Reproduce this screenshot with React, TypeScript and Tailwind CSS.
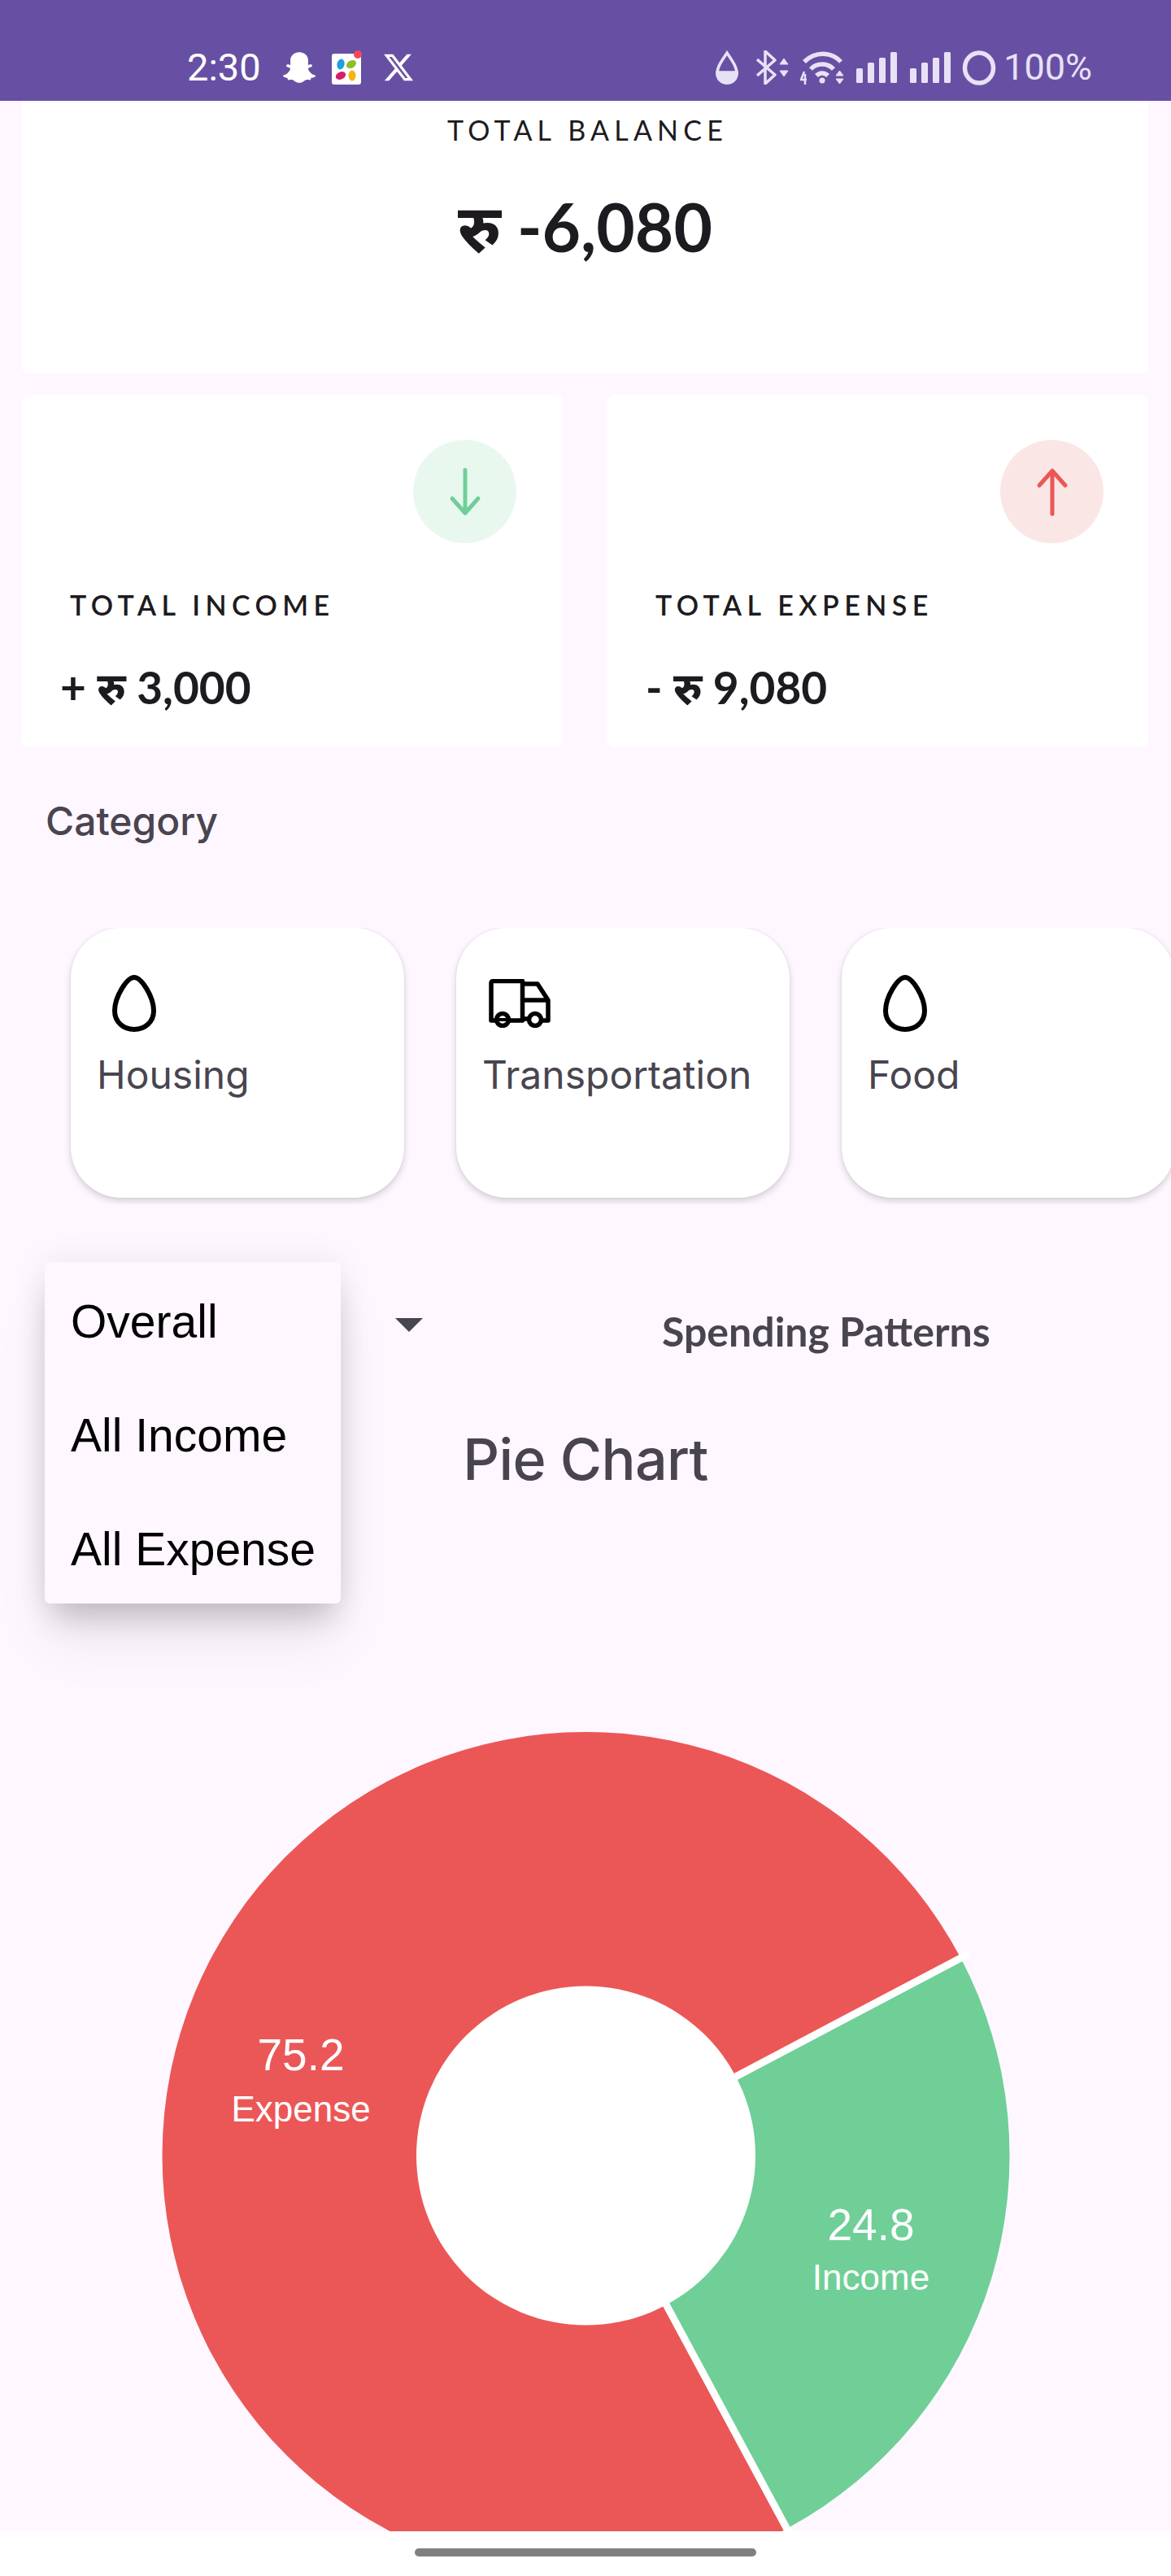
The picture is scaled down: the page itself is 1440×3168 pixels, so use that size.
import React from "react";
import { FaXTwitter } from "react-icons/fa6";
import { FaSnapchatGhost } from "react-icons/fa";

const lato = "font-['Lato','Noto_Sans',sans-serif]";
const inter = "font-['Inter',sans-serif]";
const arial = "font-['Liberation_Sans',Arial,sans-serif]";

function Egg() {
  return (
    <svg width="56" height="70" viewBox="0 0 56 70" fill="none" stroke="#000" strokeWidth="6">
      <path d="M28 3C37 3 52 27 52 44C52 58 41 67 28 67C15 67 4 58 4 44C4 27 19 3 28 3Z" />
    </svg>
  );
}

function Truck() {
  return (
    <svg width="76" height="60" viewBox="0 0 76 60" fill="none" stroke="#000" strokeWidth="5.500" strokeLinejoin="round">
      <path d="M9 51H3V5Q3 2.500 6 2.500H41.500V51H26" />
      <path d="M41.500 6H60L73 26V51H66" />
      <path d="M41.500 26H73" />
      <path d="M41.500 49H48" />
      <circle cx="17" cy="50" r="7.500" fill="#fff" />
      <path d="M10 50H24" strokeWidth="4" />
      <circle cx="57" cy="50" r="7.500" fill="#fff" />
    </svg>
  );
}

function CategoryCard({ label, icon, iconClass }: { label: string; icon: React.ReactNode; iconClass: string }) {
  return (
    <div className="w-[410px] h-[332px] shrink-0 rounded-[62px] bg-white shadow-[0_4px_8px_rgba(0,0,0,0.16),0_0_3px_rgba(0,0,0,0.08)] pl-[32px] pt-[58px]">
      <div className={`h-[70px] flex items-center ${iconClass}`}>{icon}</div>
      <div className={`${inter} mt-[24px] text-[48px] leading-[58px] text-[#49454f]`}>{label}</div>
    </div>
  );
}

function Arrow({ color, up }: { color: string; up?: boolean }) {
  return (
    <svg width="40" height="60" viewBox="0 0 40 60" fill="none" stroke={color} strokeWidth="5" strokeLinecap="round" strokeLinejoin="round">
      {up ? <path d="M20 57V4M4 22L20 4L36 22" /> : <path d="M20 3V56M4 38L20 56L36 38" />}
    </svg>
  );
}

function StatCard({ title, amount, arrowColor, circle, up, pad }: { title: string; amount: string; arrowColor: string; circle: string; up?: boolean; pad: string }) {
  return (
    <div className="w-[665px] h-[433px] bg-white rounded-[8px] relative">
      <div className={`flex justify-end ${pad} pt-[55px]`}>
        <div className={`w-[127px] h-[127px] rounded-full flex items-center justify-center ${circle}`}>
          <Arrow color={arrowColor} up={up} />
        </div>
      </div>
      <div className={`${lato} pl-[59px] mt-[56px] text-[34px] leading-[40px] font-semibold tracking-[6.4px] text-[#1d1b20]`}>{title}</div>
      <div className={`${lato} pl-[47px] mt-[48px] text-[55px] leading-[66px] font-bold text-[#1d1b20]`}>{amount}</div>
    </div>
  );
}

function StatusBar() {
  const tint = "#e8e1f5";
  return (
    <div className="h-[124px] bg-[#6750a4] flex items-start pl-[230px] pr-[97px] pt-[60px] shrink-0">
      <div className="flex items-center h-[46px] gap-[20px]">
        <span className="font-['Roboto',sans-serif] text-[47px] leading-[46px] text-white mr-[7px]">2:30</span>
        <FaSnapchatGhost color="#fff" size={40} />
        <svg width="38" height="42" viewBox="0 0 38 42">
          <rect x="0" y="4" width="36" height="38" rx="3" fill="#fff" />
          <ellipse cx="11" cy="17" rx="4.500" ry="6.500" fill="#1f9fe0" transform="rotate(15 11 17)" />
          <ellipse cx="24" cy="17" rx="6.500" ry="4.500" fill="#8cbf2a" transform="rotate(-30 24 17)" />
          <ellipse cx="11" cy="31" rx="6.500" ry="4.500" fill="#d81b6a" transform="rotate(-25 11 31)" />
          <ellipse cx="25" cy="31" rx="4.500" ry="6.500" fill="#f2b514" />
          <circle cx="32" cy="5" r="5" fill="#f04b5a" />
        </svg>
        <FaXTwitter color="#fff" size={40} className="ml-[4px]" />
      </div>
      <div className="flex-1" />
      <div className="flex items-center h-[46px]">
        <svg width="28" height="42" viewBox="0 0 28 42" fill="none" stroke={tint} strokeWidth="3.500">
          <path d="M14 3C8 12 2 20 2 28C2 35 7 40 14 40C21 40 26 35 26 28C26 20 20 12 14 3Z" />
          <path d="M2 27H26C26 35 21 40 14 40C7 40 2 35 2 27Z" fill={tint} />
        </svg>
        <svg className="ml-[22px]" width="40" height="42" viewBox="0 0 40 42" fill="none" stroke={tint} strokeWidth="3.500">
          <path d="M1 11L23 30L11 41V1L23 12L1 31" strokeLinejoin="round" />
          <path d="M29 17L34 10L39 17ZM29 25L34 32L39 25Z" fill={tint} strokeWidth="1" />
        </svg>
        <svg className="ml-[14px]" width="56" height="44" viewBox="0 0 56 44" fill="none" stroke={tint} strokeWidth="5.500">
          <path d="M5 15C18 2 38 2 50 15" />
          <path d="M13 24C20 16 34 16 41 24" />
          <path d="M20 32C24 28 30 28 34 32" />
          <circle cx="27" cy="38" r="3.500" fill={tint} stroke="none" />
          <path d="M44 32L48.500 26L53 32ZM44 36L48.500 42L53 36Z" fill={tint} strokeWidth="1" />
          <path d="M5 27L1 37H8M6 30V43" strokeWidth="2.500" />
        </svg>
        <svg className="ml-[13px]" width="50" height="38" viewBox="0 0 50 38" fill={tint}>
          <rect x="0" y="20" width="8" height="18" rx="1.500" />
          <rect x="14" y="13" width="8" height="25" rx="1.500" />
          <rect x="28" y="7" width="8" height="31" rx="1.500" />
          <rect x="42" y="0" width="8" height="38" rx="1.500" />
        </svg>
        <svg className="ml-[16px]" width="50" height="38" viewBox="0 0 50 38" fill={tint}>
          <rect x="0" y="20" width="8" height="18" rx="1.500" />
          <rect x="14" y="13" width="8" height="25" rx="1.500" />
          <rect x="28" y="7" width="8" height="31" rx="1.500" />
          <rect x="42" y="0" width="8" height="38" rx="1.500" />
        </svg>
        <svg className="ml-[14px]" width="42" height="43" viewBox="0 0 42 43" fill="none" stroke={tint} strokeWidth="5.500">
          <ellipse cx="21" cy="21.500" rx="17.500" ry="18.500" />
        </svg>
        <span className="font-['Roboto',sans-serif] text-[45px] leading-[46px] ml-[9px]" style={{ color: tint }}>100%</span>
      </div>
    </div>
  );
}

function Chart() {
  return (
    <div className="relative w-[1052px] h-[1052px] mx-auto">
      <svg width="1052" height="1052" viewBox="-526.5 -526 1052 1052">
        <path d="M0 0L247 458.700A521 521 0 1 1 460.900 -243Z" fill="#eb5757" />
        <path d="M0 0L460.900 -243A521 521 0 0 1 247 458.700Z" fill="#6fcf97" />
        <path d="M0 0L470 -247.800M0 0L251.500 467" stroke="#fff" strokeWidth="9" />
        <circle cx="0" cy="0" r="208.500" fill="#fff" />
      </svg>
      <div className={`${arial} absolute left-[56px] top-[372px] w-[240px] text-center text-white`}>
        <div className="text-[55px] leading-[60px]">75.2</div>
        <div className="text-[44px] leading-[46px] mt-[14px]">Expense</div>
      </div>
      <div className={`${arial} absolute left-[757px] top-[581px] w-[240px] text-center text-white`}>
        <div className="text-[55px] leading-[60px]">24.8</div>
        <div className="text-[44px] leading-[46px] mt-[12px]">Income</div>
      </div>
    </div>
  );
}

export default function App() {
  return (
    <div className="w-[1440px] h-[3168px] flex flex-col overflow-hidden bg-[#fef7ff] relative">
      <StatusBar />
      <main className="relative flex-1 min-h-0 overflow-hidden">
        <section className="ml-[27px] w-[1385px] h-[335px] bg-white rounded-b-[8px] text-center text-[#1d1b20]">
          <div className={`${lato} pt-[16px] pl-[6px] text-[34px] leading-[40px] tracking-[6.2px]`}>TOTAL BALANCE</div>
          <div className={`${lato} mt-[48px] text-[82px] leading-[100px] font-bold`}>रु -6,080</div>
        </section>

        <section className="ml-[27px] mt-[27px] flex gap-[55px]">
          <StatCard title="TOTAL INCOME" amount="+ रु 3,000" arrowColor="#6fcf97" circle="bg-[#e9f8ef]" pad="pr-[57px]" />
          <StatCard title="TOTAL EXPENSE" amount="- रु 9,080" arrowColor="#eb5757" circle="bg-[#fbe6e6]" up pad="pr-[55px]" />
        </section>

        <h2 className={`${inter} pl-[56px] mt-[62px] text-[48px] leading-[58px] font-medium text-[#49454f]`}>Category</h2>

        <section className="mt-[102px] pl-[87px] flex gap-[64px] h-[340px] overflow-hidden">
          <CategoryCard label="Housing" icon={<Egg />} iconClass="pl-[18px]" />
          <CategoryCard label="Transportation" icon={<Truck />} iconClass="pl-[8px]" />
          <CategoryCard label="Food" icon={<Egg />} iconClass="pl-[18px]" />
        </section>

        <section className="mt-[126px] h-[60px] flex items-center">
          <div className="ml-[486px] w-0 h-0 border-l-[17px] border-r-[17px] border-t-[17px] border-l-transparent border-r-transparent border-t-[#49454f] -translate-y-[8px]" />
          <div className={`${lato} ml-[294px] text-[50px] leading-[60px] font-bold text-[#49454f]`}>Spending Patterns</div>
        </section>

        <h1 className={`${inter} mt-[86px] text-center text-[70px] leading-[84px] font-medium tracking-[-0.7px] text-[#49454f]`}>Pie Chart</h1>

        <section className="mt-[288px]">
          <Chart />
        </section>

        <div className={`${arial} absolute left-[55px] top-[1428px] w-[364px] h-[420px] bg-[#fef7ff] rounded-[6px] shadow-[0_28px_36px_-10px_rgba(0,0,0,0.17),0_0_40px_rgba(0,0,0,0.08),0_50px_70px_rgba(0,0,0,0.06)] flex flex-col pl-[32px] text-[57px] leading-[70px] text-black`}>
          <div className="h-[140px] flex items-center pt-[5px]">Overall</div>
          <div className="h-[140px] flex items-center pt-[5px]">All Income</div>
          <div className="h-[140px] flex items-center pt-[5px]">All Expense</div>
        </div>
      </main>
      <footer className="h-[55px] shrink-0 bg-white relative flex justify-center pt-[21px]">
        <div className="w-[420px] h-[10px] rounded-full bg-[#808080]" />
      </footer>
    </div>
  );
}
